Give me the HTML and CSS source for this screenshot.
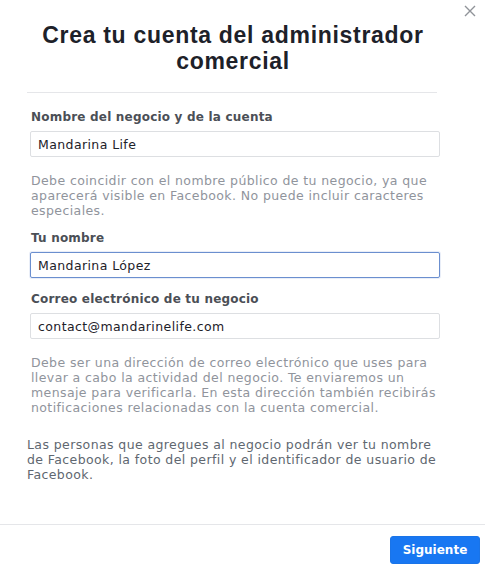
FILE: index.html
```html
<!DOCTYPE html>
<html lang="es">
  <head>
    <meta name="viewport" content="width=device-width, initial-scale=1.0" />
    <title>Crea tu cuenta del administrador comercial</title>
    <link rel="stylesheet" href="styles.css">
  </head>

  <body>
    <div class="dialog">
      <button class="close" aria-label="Cerrar">
        <svg width="12" height="12" viewBox="0 0 12 12">
          <path d="M1 1 L11 11 M11 1 L1 11" stroke="#909399" stroke-width="1.4" fill="none" />
        </svg>
      </button>

      <div class="header">
        <h1>Crea tu cuenta del administrador comercial</h1>
      </div>

      <form class="form">
        <label class="label" for="business">Nombre del negocio y de la cuenta</label>
        <input class="field" id="business" type="text" value="Mandarina Life" />
        <p class="hint">Debe coincidir con el nombre público de tu negocio, ya que aparecerá visible en Facebook. No puede incluir caracteres especiales.</p>

        <label class="label" for="name">Tu nombre</label>
        <input class="field focused" id="name" type="text" value="Mandarina López" />

        <label class="label" for="email">Correo electrónico de tu negocio</label>
        <input class="field" id="email" type="text" value="contact@mandarinelife.com" />
        <p class="hint">Debe ser una dirección de correo electrónico que uses para llevar a cabo la actividad del negocio. Te enviaremos un mensaje para verificarla. En esta dirección también recibirás notificaciones relacionadas con la cuenta comercial.</p>

        <p class="note">Las personas que agregues al negocio podrán ver tu nombre de Facebook, la foto del perfil y el identificador de usuario de Facebook.</p>
      </form>

      <div class="footer">
        <button class="next" type="button">Siguiente</button>
      </div>
    </div>
  </body>
</html>
```

FILE: styles.css
```css
* {
  padding: 0;
  margin: 0;
  box-sizing: border-box;
  font-family: "DejaVu Sans", Verdana, sans-serif;
}

body {
  background-color: #ffffff;
}

.dialog {
  position: relative;
  width: 485px;
  height: 568px;
  display: flex;
  flex-direction: column;
}

.close {
  position: absolute;
  top: 4px;
  right: 8px;
  width: 14px;
  height: 14px;
  border: none;
  background: transparent;
  display: flex;
  align-items: center;
  justify-content: center;
  cursor: pointer;
}

.header {
  margin: 0 48px 0 27px;
  padding: 22px 0 18px;
  border-bottom: 1px solid #e5e6e9;
}

.header h1 {
  font-family: "Liberation Sans", Helvetica, Arial, sans-serif;
  font-size: 23px;
  line-height: 26px;
  font-weight: bold;
  letter-spacing: 0.7px;
  text-align: center;
  color: #1d2129;
  padding: 0 0 0 2px;
}

.form {
  display: flex;
  flex-direction: column;
  padding: 16px 45px 0 30px;
  flex: 1;
}

.label {
  font-size: 12px;
  font-weight: bold;
  line-height: 16px;
  letter-spacing: 0.2px;
  color: #4b4f56;
  padding-left: 1px;
  margin-bottom: 6px;
}

.field {
  height: 26px;
  border: 1px solid #dddfe2;
  border-radius: 2px;
  padding: 0 7px;
  font-family: "DejaVu Sans", Verdana, sans-serif;
  font-size: 12.5px;
  letter-spacing: 0.4px;
  color: #1d2129;
  outline: none;
  margin-bottom: 14px;
}

.field.focused {
  border-color: #6b8fcf;
  box-shadow: 0 0 0 1px rgba(107, 143, 207, 0.15);
  margin-bottom: 13px;
}

.hint {
  font-size: 12.5px;
  line-height: 15px;
  letter-spacing: 0.4px;
  color: #90949c;
  padding-left: 1px;
  margin-top: 2px;
  margin-bottom: 12px;
}

.note {
  font-size: 12.5px;
  line-height: 15px;
  letter-spacing: 0.4px;
  color: #606770;
  margin-left: -3px;
  margin-top: 10px;
}

.footer {
  border-top: 1px solid #e5e6e9;
  height: 44px;
  display: flex;
  justify-content: flex-end;
  align-items: flex-start;
  padding: 11px 5px 0 0;
}

.next {
  width: 90px;
  height: 28px;
  border: 1px solid #1a74e8;
  border-radius: 3px;
  background-color: #1877f2;
  color: #ffffff;
  font-family: "DejaVu Sans", Verdana, sans-serif;
  font-size: 12px;
  font-weight: bold;
  cursor: pointer;
}
```
